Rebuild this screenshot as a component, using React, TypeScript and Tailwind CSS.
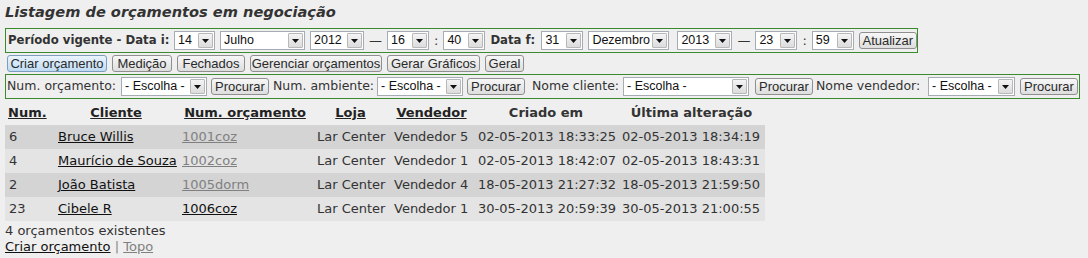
const verdana = "font-['DejaVu_Sans',Verdana,sans-serif]";
const arial = "font-['Liberation_Sans',Arial,sans-serif]";

type SelProps = { value: string; w: string };

const Select = ({ value, w }: SelProps) => (
  <div
    className={`${w} ${arial} h-[19px] shrink-0 flex items-center bg-white border border-[#a5acb2] text-[12.5px] text-[#111] pl-[3px] pr-[1px]`}
  >
    <span className="flex-1 overflow-hidden whitespace-nowrap leading-none">{value}</span>
    <span className="w-[15px] h-[15px] shrink-0 flex items-center justify-center bg-gradient-to-b from-[#f4f4f4] to-[#dcdcdc] border border-[#b8b8b8] rounded-[1px]">
      <svg width="7" height="4" viewBox="0 0 7 4">
        <path d="M0 0h7L3.5 4z" fill="#111" />
      </svg>
    </span>
  </div>
);

type BtnProps = { label: string; w: string; active?: boolean };

const Btn = ({ label, w, active = false }: BtnProps) => (
  <button
    type="button"
    className={`${arial} ${w} h-[17px] shrink-0 text-center whitespace-nowrap text-[13px] leading-none text-[#2a2a2a] border rounded-[3px] ${
      active
        ? "border-[#7b9ebd] bg-gradient-to-b from-[#eaf4fd] to-[#bfdcf4]"
        : "border-[#8f8f8f] bg-gradient-to-b from-[#f7f7f7] to-[#dedede]"
    }`}
  >
    {label}
  </button>
);

const Label = ({ text, w, bold = false }: { text: string; w: string; bold?: boolean }) => (
  <span className={`${w} shrink-0 whitespace-nowrap ${bold ? "font-bold text-[11.7px]" : "text-[12.5px]"}`}>
    {text}
  </span>
);

const rows = [
  { n: "6", c: "Bruce Willis", o: "1001coz", visited: true, v: "Vendedor 5", cr: "02-05-2013 18:33:25", up: "02-05-2013 18:34:19" },
  { n: "4", c: "Maurício de Souza", o: "1002coz", visited: true, v: "Vendedor 1", cr: "02-05-2013 18:42:07", up: "02-05-2013 18:43:31" },
  { n: "2", c: "João Batista", o: "1005dorm", visited: true, v: "Vendedor 4", cr: "18-05-2013 21:27:32", up: "18-05-2013 21:59:50" },
  { n: "23", c: "Cibele R", o: "1006coz", visited: false, v: "Vendedor 1", cr: "30-05-2013 20:59:39", up: "30-05-2013 21:00:55" },
];

const App = () => {
  return (
    <div className={`${verdana} w-[1088px] h-[258px] bg-[#efefef] text-[13px] text-[#333] pl-[5px] overflow-hidden`}>
      <h1 className="h-[28px] pt-[2px] text-[14.6px] font-bold italic text-[#333] leading-[20px]">
        Listagem de orçamentos em negociação
      </h1>

      {/* período */}
      <div className="w-[913px] h-[25px] border border-[#3c8a2e] flex items-center gap-[5px] px-[2px]">
        <Label text="Período vigente - Data i:" w="w-[161px]" bold />
        <Select value="14" w="w-[41px]" />
        <Select value="Julho" w="w-[85px]" />
        <Select value="2012" w="w-[54px]" />
        <span>—</span>
        <Select value="16" w="w-[42px]" />
        <span>:</span>
        <Select value="40" w="w-[42px]" />
        <Label text="Data f:" w="w-[46px]" bold />
        <Select value="31" w="w-[42px]" />
        <Select value="Dezembro" w="w-[81px]" />
        <Select value="2013" w="w-[55px] ml-[3px]" />
        <span>—</span>
        <Select value="23" w="w-[42px]" />
        <span>:</span>
        <Select value="59" w="w-[42px]" />
        <Btn label="Atualizar" w="w-[58px]" />
      </div>

      <div className="h-[21px] flex items-center gap-[5px] pl-[2px]">
        <Btn label="Criar orçamento" w="w-[100px]" active />
        <Btn label="Medição" w="w-[60px]" />
        <Btn label="Fechados" w="w-[68px]" />
        <Btn label="Gerenciar orçamentos" w="w-[132px]" />
        <Btn label="Gerar Gráficos" w="w-[93px]" />
        <Btn label="Geral" w="w-[39px]" />
      </div>

      {/* filtros */}
      <div className="w-[1075px] h-[25px] border border-[#3c8a2e] flex items-center px-[1px]">
        <Label text="Num. orçamento:" w="w-[110px]" />
        <Select value="- Escolha -" w="w-[86px] ml-[4px]" />
        <Btn label="Procurar" w="w-[58px] ml-[4px]" />
        <Label text="Num. ambiente:" w="w-[100px] ml-[4px]" />
        <Select value="- Escolha -" w="w-[86px] ml-[4px]" />
        <Btn label="Procurar" w="w-[58px] ml-[4px]" />
        <Label text="Nome cliente:" w="w-[86px] ml-[7px]" />
        <Select value="- Escolha -" w="w-[126px] ml-[5px]" />
        <Btn label="Procurar" w="w-[58px] ml-[6px]" />
        <Label text="Nome vendedor:" w="w-[108px] ml-[3px]" />
        <Select value="- Escolha -" w="w-[87px] ml-[4px]" />
        <Btn label="Procurar" w="w-[58px] ml-[5px]" />
      </div>

      <table className="mt-[2px] border-collapse text-[13px]">
        <thead>
          <tr className="h-[24px] text-[#222]">
            <th className="w-[49px] text-left pl-[3px] font-bold"><span className="underline">Num.</span></th>
            <th className="w-[124px] font-bold"><span className="underline">Cliente</span></th>
            <th className="w-[134px] font-bold"><span className="underline">Num. orçamento</span></th>
            <th className="w-[77px] font-bold"><span className="underline">Loja</span></th>
            <th className="w-[85px] font-bold"><span className="underline">Vendedor</span></th>
            <th className="w-[144px] font-bold text-[#333]">Criado em</th>
            <th className="w-[147px] font-bold text-[#333]">Última alteração</th>
          </tr>
        </thead>
        <tbody>
          {rows.map((r, i) => (
            <tr key={r.n} className={`h-[24px] ${i % 2 === 0 ? "bg-[#d4d4d4]" : "bg-[#e4e4e4]"}`}>
              <td className="pl-[4px]">{r.n}</td>
              <td className="pl-[4px]"><a className="underline text-[#111]">{r.c}</a></td>
              <td className="pl-[4px]">
                <a className={`underline ${r.visited ? "text-[#808080]" : "text-[#111]"}`}>{r.o}</a>
              </td>
              <td className="pl-[5px]">Lar Center</td>
              <td className="pl-[5px]">{r.v}</td>
              <td className="pl-[4px]">{r.cr}</td>
              <td className="pl-[4px]">{r.up}</td>
            </tr>
          ))}
        </tbody>
      </table>

      <div className="leading-[17px] mt-[1px]">4 orçamentos existentes</div>
      <div className="leading-[16px]">
        <a className="underline text-[#111]">Criar orçamento</a>
        <span className="text-[#888]"> | </span>
        <a className="underline text-[#808080]">Topo</a>
      </div>
    </div>
  );
};

export default App;
